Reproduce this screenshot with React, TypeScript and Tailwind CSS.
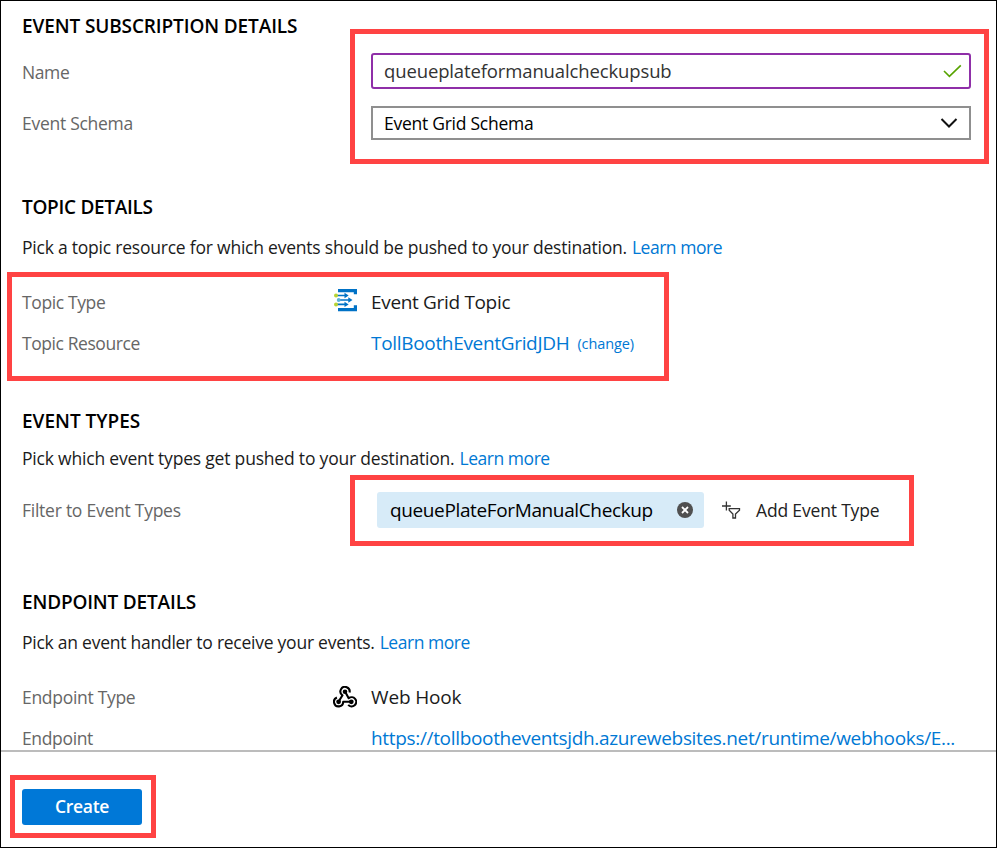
import type { ReactNode } from "react";

function Heading({ className, children }: { className: string; children: ReactNode }) {
  return (
    <h2 className={`flex shrink-0 items-center text-[19px] font-semibold whitespace-nowrap text-black ${className}`}>
      {children}
    </h2>
  );
}

function Row({ label, tracking, className, children }: {
  label: string;
  tracking: string;
  className: string;
  children: ReactNode;
}) {
  return (
    <div className={`flex shrink-0 items-center ${className}`}>
      <div className={`w-[311px] shrink-0 text-[17.5px] text-[#666] ${tracking}`}>{label}</div>
      {children}
    </div>
  );
}

function LearnMore() {
  return <a className="ml-[5px] tracking-[-0.46px] text-[#0078d4]">Learn more</a>;
}

function EventGridIcon() {
  return (
    <svg width="25" height="24" viewBox="0 0 25 24" fill="none">
      <path d="M5 1H24V6.3H20.8V4.2H5ZM5 23.3H24V17.2H20.8V20H5Z" fill="#0072c6" />
      <path d="M4 7.5H13M7 12H17M4 16.4H13" stroke="#0072c6" strokeWidth="1.7" />
      <path d="M11.5 4.8L15.7 7.5L11.5 10.2ZM15.3 9.3L19.5 12L15.3 14.7ZM11.5 13.7L15.7 16.4L11.5 19.1Z" fill="#0072c6" />
      <circle cx="3" cy="7.5" r="2" fill="#b8d432" />
      <circle cx="5.7" cy="12" r="1.9" fill="#59b4d9" />
      <circle cx="3" cy="16.4" r="2" fill="#b8d432" />
    </svg>
  );
}

function WebhookIcon() {
  return (
    <svg width="24" height="22" viewBox="0 0 24 22" fill="none" stroke="#000" strokeWidth="2.1" strokeLinejoin="round">
      <path d="M5.5 15.7L9.5 9.3A4.6 4.6 0 1 1 16.5 6.6" />
      <path d="M12 5.6L15.7 12.2A4.6 4.6 0 1 1 15.2 18.9" />
      <path d="M18.5 15.8H10.2A4.6 4.6 0 1 1 3.9 11.5" />
      <g fill="#000" stroke="none">
        <circle cx="12" cy="5.7" r="2.3" />
        <circle cx="5.6" cy="15.8" r="2.4" />
        <circle cx="18.3" cy="15.8" r="2.4" />
      </g>
    </svg>
  );
}

function AddFilterIcon() {
  return (
    <svg width="20" height="20" viewBox="0 0 20 20" fill="none" stroke="#333" strokeWidth="1.3">
      <path d="M0 6H8.8M4.4 1.6V10.4" />
      <path d="M7.2 8.7H17.5V10.2L13.5 14V18H10.9V14L7.2 10.2Z" />
    </svg>
  );
}

export default function App() {
  return (
    <div className="relative flex h-[848px] w-[997px] flex-col border border-black bg-white font-['Open_Sans','Noto_Sans',sans-serif] text-[#1b1b1b]">
      <main className="flex h-[749px] shrink-0 flex-col overflow-hidden pl-[21px] whitespace-nowrap">
        <Heading className="h-[50px] pt-px tracking-[-0.12px]">EVENT SUBSCRIPTION DETAILS</Heading>
        <Row label="Name" tracking="tracking-[-0.4px] pt-[2px]" className="h-10">
          <div className="ml-[38px] flex h-9 w-[600px] items-center justify-between rounded-[3px] border-2 border-[#8f2fa8] pr-[7px] pl-[11px]">
            <span className="text-[18.5px] tracking-[-0.13px] text-[#333]">queueplateformanualcheckupsub</span>
            <svg width="20" height="14" viewBox="0 0 20 14" fill="none" stroke="#57a300" strokeWidth="1.6">
              <path d="M2 7L7.4 12.3L18.8 1.3" />
            </svg>
          </div>
        </Row>
        <Row label="Event Schema" tracking="tracking-[-0.28px]" className="h-16">
          <div className="ml-[38px] flex h-[34px] w-[600px] items-center justify-between border-2 border-[#8f8f8f] pr-[10px] pl-[11px]">
            <span className="text-[17.5px] tracking-[-0.26px] text-black">Event Grid Schema</span>
            <svg width="20" height="12" viewBox="0 0 20 12" fill="none" stroke="#111" strokeWidth="2">
              <path d="M2.5 2L10 9.5L17.5 2" />
            </svg>
          </div>
        </Row>

        <Heading className="mt-[31px] h-10 pt-[2px] tracking-[-0.29px]">TOPIC DETAILS</Heading>
        <p className="flex h-[42px] shrink-0 items-center text-[17.5px] tracking-[-0.22px]">
          Pick a topic resource for which events should be pushed to your destination.
          <LearnMore />
        </p>
        <Row label="Topic Type" tracking="tracking-[-0.38px]" className="mt-[14px] h-[41px]">
          <div className="w-[38px] pb-[6px]"><EventGridIcon /></div>
          <span className="text-[19px] tracking-[-0.33px]">Event Grid Topic</span>
        </Row>
        <Row label="Topic Resource" tracking="tracking-[-0.43px]" className="h-[41px]">
          <a className="ml-[38px] text-[19px] tracking-[-0.32px] text-[#0078d4]">TollBoothEventGridJDH</a>
          <a className="ml-[8px] text-[14.5px] tracking-[-0.1px] text-[#0078d4]">(change)</a>
        </Row>

        <Heading className="mt-[37px] h-10">EVENT TYPES</Heading>
        <p className="flex h-[34px] shrink-0 items-center text-[17.5px] tracking-[-0.195px]">
          Pick which event types get pushed to your destination.
          <LearnMore />
        </p>
        <Row label="Filter to Event Types" tracking="tracking-[-0.25px] pt-px" className="h-[70px]">
          <div className="ml-[44px] flex h-9 w-[327px] items-center justify-between rounded-[3px] bg-[#d7ebf8] pr-[11px] pl-[13px]">
            <span className="text-[19px] tracking-[-0.37px] text-black">queuePlateForManualCheckup</span>
            <svg width="16" height="16" viewBox="0 0 16 16" fill="none">
              <circle cx="8" cy="8" r="8" fill="#505050" />
              <path d="M5 5L11 11M11 5L5 11" stroke="#fff" strokeWidth="1.8" />
            </svg>
          </div>
          <button className="ml-[18px] flex items-center gap-[14px] text-[17.5px] tracking-[-0.17px] text-[#222]">
            <AddFilterIcon />
            Add Event Type
          </button>
        </Row>

        <Heading className="mt-9 h-10 pt-[2px] tracking-[-0.17px]">ENDPOINT DETAILS</Heading>
        <p className="flex h-[42px] shrink-0 items-center text-[17.5px] tracking-[-0.25px]">
          Pick an event handler to receive your events.
          <LearnMore />
        </p>
        <Row label="Endpoint Type" tracking="tracking-[-0.3px]" className="mt-[14px] h-10">
          <div className="w-[38px]"><WebhookIcon /></div>
          <span className="text-[19px] tracking-[-0.15px]">Web Hook</span>
        </Row>
        <Row label="Endpoint" tracking="tracking-[-0.35px]" className="h-[42px]">
          <a className="ml-[38px] text-[19px] tracking-[-0.33px] text-[#0078d4]">
            https://tollbootheventsjdh.azurewebsites.net/runtime/webhooks/E...
          </a>
        </Row>
      </main>

      <footer className="flex-1 border-t-2 border-[#bcbcbc] pt-[37px] pl-[21px]">
        <button className="flex h-9 w-[120px] items-center justify-center rounded-[3px] bg-[#0078d7] pb-[2px] text-[17.5px] font-semibold tracking-[-0.3px] text-white">
          Create
        </button>
      </footer>

      {/* Callout frames around the fields to fill in */}
      <div className="pointer-events-none absolute top-[28px] left-[349px] h-[135px] w-[639px] border-5 border-[#ff4343]" />
      <div className="pointer-events-none absolute top-[271px] left-[6px] h-[109px] w-[662px] border-5 border-[#ff4343]" />
      <div className="pointer-events-none absolute top-[474px] left-[349px] h-[71px] w-[564px] border-5 border-[#ff4343]" />
      <div className="pointer-events-none absolute top-[774px] left-[9px] h-[63px] w-[146px] border-5 border-[#ff4343]" />
    </div>
  );
}
